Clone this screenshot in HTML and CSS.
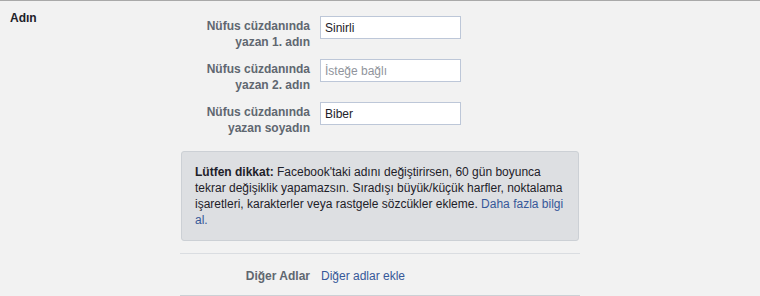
FILE: index.html
```html
<!DOCTYPE html>
<html lang="tr">
<head>
<meta charset="utf-8">
<title>Adın</title>
<link rel="stylesheet" href="styles.css">
</head>
<body>
<div class="section">
  <div class="section-title">Adın</div>
  <div class="section-body">
    <div class="field-row">
      <label class="field-label">Nüfus cüzdanında<br>yazan 1. adın</label>
      <input class="field-input" type="text" value="Sinirli">
    </div>
    <div class="field-row">
      <label class="field-label">Nüfus cüzdanında<br>yazan 2. adın</label>
      <input class="field-input" type="text" placeholder="İsteğe bağlı">
    </div>
    <div class="field-row">
      <label class="field-label">Nüfus cüzdanında<br>yazan soyadın</label>
      <input class="field-input" type="text" value="Biber">
    </div>
    <div class="notice"><b>Lütfen dikkat:</b> Facebook'taki adını değiştirirsen, 60 gün boyunca tekrar değişiklik yapamazsın. Sıradışı büyük/küçük harfler, noktalama işaretleri, karakterler veya rastgele sözcükler ekleme. <a class="link" href="#">Daha fazla bilgi al.</a></div>
    <div class="other-row">
      <span class="field-label">Diğer Adlar</span>
      <a class="link other-link" href="#">Diğer adlar ekle</a>
    </div>
  </div>
</div>
</body>
</html>
```

FILE: styles.css
```css
html, body {
  margin: 0;
  padding: 0;
  background: #f2f2f2;
}
body {
  font-family: "Liberation Sans", Arial, sans-serif;
  font-size: 12px;
  line-height: 16px;
  color: #1d2129;
  height: 296px;
  overflow: hidden;
}
.section {
  display: flex;
  border-top: 1px solid #a9a9a9;
}
.section-title {
  width: 170px;
  padding: 9px 0 0 10px;
  font-weight: bold;
  color: #1d2129;
}
.section-body {
  width: 400px;
  padding-top: 15px;
}
.field-row {
  display: flex;
  align-items: flex-start;
  margin-bottom: 9px;
}
.field-label {
  width: 130px;
  text-align: right;
  font-weight: bold;
  color: #606770;
  padding-top: 2px;
  flex-shrink: 0;
}
.field-input {
  box-sizing: border-box;
  width: 141px;
  height: 23px;
  margin: 0 0 0 10px;
  padding: 0 4px;
  border: 1px solid #bdc7d8;
  border-radius: 0;
  background: #fff;
  font-family: "Liberation Sans", Arial, sans-serif;
  font-size: 12px;
  color: #1d2129;
  outline: none;
}
.field-input::placeholder {
  color: #90949c;
  opacity: 1;
}
.notice {
  margin: 15px 1px 12px 1px;
  padding: 12px 12px 12px 13px;
  background: #dddfe2;
  border: 1px solid #ccd0d5;
  border-radius: 3px;
}
.link {
  color: #365899;
  text-decoration: none;
}
.other-row {
  display: flex;
  border-top: 1px solid #dadde1;
  border-bottom: 1px solid #ccd0d5;
  padding: 12px 0 11px;
}
.other-row .field-label {
  padding-top: 2px;
}
.other-link {
  margin-left: 11px;
  padding-top: 2px;
}
```
